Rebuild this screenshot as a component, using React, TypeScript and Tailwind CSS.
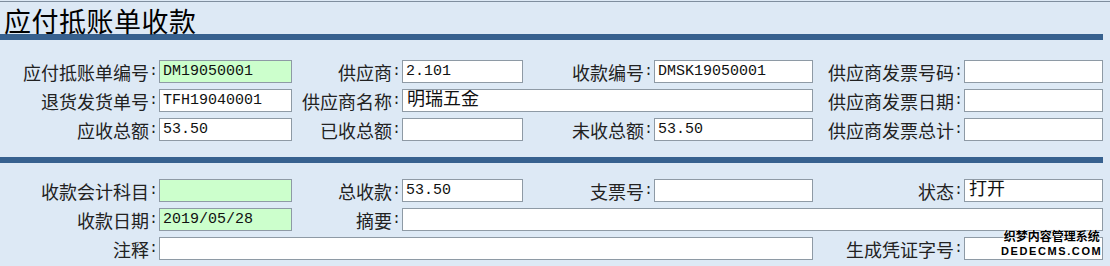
import React from "react";

type Cell =
  | { kind: "label"; text: string }
  | { kind: "input"; value?: string; green?: boolean; span?: string; cjk?: boolean };

const L = (text: string): Cell => ({ kind: "label", text });
const I = (value = "", opts: { green?: boolean; span?: string; cjk?: boolean } = {}): Cell => ({
  kind: "input",
  value,
  ...opts,
});

const topRows: Cell[][] = [
  [L("应付抵账单编号"), I("DM19050001", { green: true }), L("供应商"), I("2.101"), L("收款编号"), I("DMSK19050001"), L("供应商发票号码"), I()],
  [L("退货发货单号"), I("TFH19040001"), L("供应商名称"), I("明瑞五金", { span: "col-span-3", cjk: true }), L("供应商发票日期"), I()],
  [L("应收总额"), I("53.50"), L("已收总额"), I(), L("未收总额"), I("53.50"), L("供应商发票总计"), I()],
];

const bottomRows: Cell[][] = [
  [L("收款会计科目"), I("", { green: true }), L("总收款"), I("53.50"), L("支票号"), I(), L("状态"), I("打开", { cjk: true })],
  [L("收款日期"), I("2019/05/28", { green: true }), L("摘要"), I("", { span: "col-span-5" })],
  [L("注释"), I("", { span: "col-span-5" }), L("生成凭证字号"), I()],
];

const FieldGrid = ({ rows }: { rows: Cell[][] }) => (
  <div className="grid grid-cols-[159px_133px_110px_121px_131px_159px_151px_139px] gap-y-[6px]">
    {rows.flat().map((c, i) =>
      c.kind === "label" ? (
        <div
          key={i}
          className="flex h-[23px] items-center justify-end whitespace-nowrap pr-[1px] text-[18px] leading-none text-[#222] [font-family:'Noto_Sans_CJK_SC',sans-serif]"
        >
          {c.text}
          <span className="text-[15px] [font-family:'Liberation_Mono',monospace]">:</span>
        </div>
      ) : (
        <input
          key={i}
          readOnly
          value={c.value}
          className={`h-[23px] border border-[#8e9aa5] pl-[3px] text-[#111] outline-none ${
            c.cjk ? "pl-[4px] text-[18px]" : "text-[15px]"
          } [font-family:'Liberation_Mono','Noto_Sans_CJK_SC',monospace] ${
            c.green ? "bg-[#ccffcc]" : "bg-white"
          } ${c.span ?? ""}`}
        />
      )
    )}
  </div>
);

export default function App() {
  return (
    <div className="relative h-[266px] w-[1110px] overflow-hidden bg-[#dde9f5]">
      <div className="mt-px h-px w-full bg-[#7f8e9e]" />
      <div className="h-[32px] whitespace-nowrap pl-[4px] pt-[5px] text-[27px] leading-[27px] tracking-[0.5px] text-black [font-family:'Noto_Sans_CJK_SC',sans-serif]">
        应付抵账单收款
      </div>
      <div className="h-[6px] w-[1103px] bg-[#37618f]" />
      <div className="pb-[16px] pt-[20px]">
        <FieldGrid rows={topRows} />
      </div>
      <div className="h-[6px] w-[1103px] bg-[#37618f]" />
      <div className="pt-[16px]">
        <FieldGrid rows={bottomRows} />
      </div>

      {/* watermark overlay */}
      <div className="absolute left-[1001px] top-[230px] flex flex-col items-center leading-none text-black [text-shadow:0_0_2px_#fff,0_0_2px_#fff,0_0_2px_#fff]">
        <span className="text-[12px] font-bold [font-family:'Noto_Sans_CJK_SC',sans-serif]">织梦内容管理系统</span>
        <span className="mt-[4px] text-[11px] font-bold tracking-[1.6px] [font-family:'Liberation_Sans',sans-serif]">
          DEDECMS.COM
        </span>
      </div>
    </div>
  );
}
